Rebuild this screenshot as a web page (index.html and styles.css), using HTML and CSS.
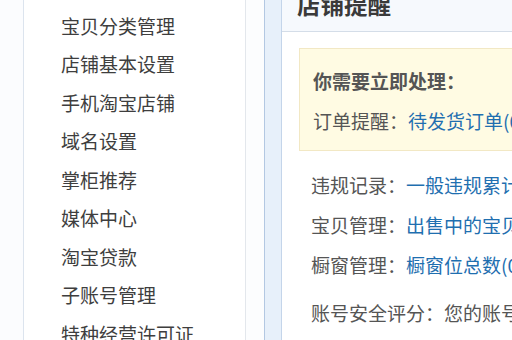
FILE: index.html
```html
<!DOCTYPE html>
<html lang="zh-CN">
<head>
<meta charset="utf-8">
<link rel="stylesheet" href="styles.css">
</head>
<body>
<div class="page">
  <div class="strip"></div>
  <div class="side">
    <ul class="menu">
      <li>图片空间</li>
      <li>宝贝分类管理</li>
      <li>店铺基本设置</li>
      <li>手机淘宝店铺</li>
      <li>域名设置</li>
      <li>掌柜推荐</li>
      <li>媒体中心</li>
      <li>淘宝贷款</li>
      <li>子账号管理</li>
      <li>特种经营许可证</li>
    </ul>
  </div>
  <div class="gap"></div>
  <div class="rail"></div>
  <div class="main">
    <div class="head">店铺提醒</div>
    <div class="notice">
      <div class="line strong">你需要立即处理：</div>
      <div class="line">订单提醒：<a class="link">待发货订单(0)</a></div>
    </div>
    <div class="rows">
      <div class="line">违规记录：<a class="link">一般违规累计(0)</a></div>
      <div class="line">宝贝管理：<a class="link">出售中的宝贝(0)</a></div>
      <div class="line">橱窗管理：<a class="link">橱窗位总数(0)</a></div>
      <div class="line safe">账号安全评分：您的账号安全</div>
    </div>
  </div>
</div>
</body>
</html>
```

FILE: styles.css
```css
html, body {
  margin: 0;
  padding: 0;
  width: 512px;
  height: 340px;
  overflow: hidden;
  background: #ffffff;
}
body {
  font-family: "Noto Sans CJK SC", "Noto Sans", sans-serif;
  font-size: 19px;
  color: #555555;
}
.page {
  display: flex;
  margin-top: -20px;
  height: 380px;
  width: 900px;
}
.strip {
  flex: none;
  width: 23px;
  background: #fbfcfe;
  border-right: 1px solid #dce4ee;
}
.side {
  flex: none;
  width: 221px;
  background: #ffffff;
  border-right: 1px solid #e3e7ec;
}
.menu {
  list-style: none;
  margin: -12px 0 0 0;
  padding: 0 0 0 37px;
}
.menu li {
  height: 38.5px;
  line-height: 38.5px;
  color: #3e3e3e;
  white-space: nowrap;
}
.gap {
  flex: none;
  width: 18px;
  background: #fcfdfe;
}
.rail {
  flex: none;
  width: 16px;
  background: #e7f0fa;
  border-left: 1px solid #b3c8e2;
  border-right: 1px solid #c4d5ea;
}
.main {
  flex: none;
  width: 600px;
  background: #ffffff;
}
.head {
  height: 30px;
  padding: 9px 0 12px 15px;
  line-height: 30px;
  font-size: 23.5px;
  font-weight: bold;
  color: #3a3a3a;
  background: #f6f9fd;
  border-bottom: 1px solid #d4dde8;
}
.notice {
  margin: 16px 0 0 17px;
  padding: 12px 13px 9px;
  background: #fffbe3;
  border: 1px solid #f2e8c4;
}
.line {
  height: 40px;
  line-height: 40px;
  white-space: nowrap;
}
.strong {
  font-weight: bold;
  color: #555555;
}
.link {
  color: #1f6fb0;
  text-decoration: none;
}
.rows {
  margin-top: 14px;
  padding-left: 29px;
}
.safe {
  margin-top: 8px;
}
```
